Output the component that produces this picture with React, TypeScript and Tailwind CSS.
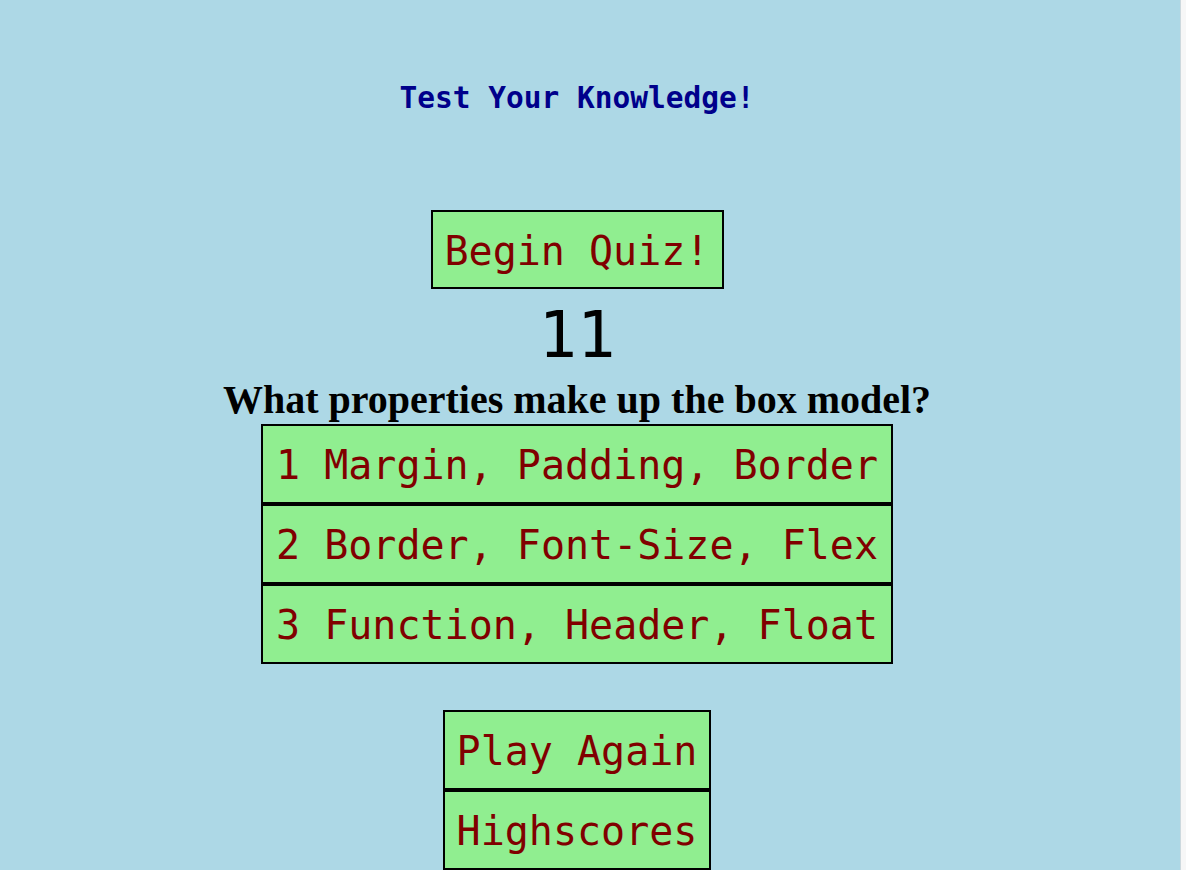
import React from 'react';

const answers = ['Margin, Padding, Border', 'Border, Font-Size, Flex', 'Function, Header, Float'];

const btn =
  "box-border h-[80px] flex items-center px-3 pt-[2px] bg-[#90ee90] border-2 border-black text-[#800000] text-[40px] leading-none font-['DejaVu_Sans_Mono',monospace] whitespace-pre";

const App: React.FC = () => {
  return (
    <div className="flex w-full min-h-[870px] h-[870px] overflow-hidden">
      <div className="flex-1 bg-[#add8e6] pr-[26px] flex flex-col items-center">
        {/* Header */}
        <h1 className="mt-[81px] text-[29.5px] leading-[34px] font-bold text-[#00008b] font-['DejaVu_Sans_Mono',monospace]">
          Test Your Knowledge!
        </h1>

        <button className={`${btn} mt-[95px] w-[293px]`}>Begin Quiz!</button>

        {/* Timer */}
        <div className="h-[88px] leading-[92px] text-[64px] text-black font-['DejaVu_Sans_Mono',monospace]">11</div>

        {/* Question */}
        <h2 className="h-[47px] leading-[46px] text-[40px] font-bold text-black font-['Liberation_Serif',serif]">
          What properties make up the box model?
        </h2>

        <div className="flex flex-col">
          {answers.map((a, i) => (
            <button key={i} className={`${btn} px-[13px]`}>
              {i + 1} {a}
            </button>
          ))}
        </div>

        <div className="mt-[46px] flex flex-col">
          <button className={btn}>Play Again</button>
          <button className={btn}>Highscores</button>
        </div>
      </div>
      {/* edge of the window behind */}
      <div className="w-[6px] bg-[#f7f7f7] border-l border-[#cdd9de]" />
    </div>
  );
};

export default App;
